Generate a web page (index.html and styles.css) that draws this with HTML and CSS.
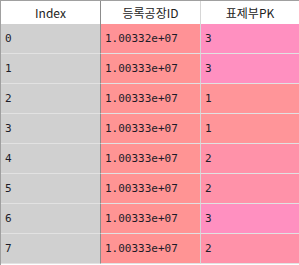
FILE: index.html
```html
<!DOCTYPE html>
<html>
<head>
<meta charset="utf-8">
<link rel="stylesheet" href="styles.css">
</head>
<body>
<div class="table">
  <div class="row head">
    <div class="cell idx">Index</div>
    <div class="cell c2">등록공장ID</div>
    <div class="cell c3">표제부PK</div>
  </div>
  <div class="row"><div class="cell idx">0</div><div class="cell c2 a">1.00332e+07</div><div class="cell c3 v3">3</div></div>
  <div class="row"><div class="cell idx">1</div><div class="cell c2">1.00333e+07</div><div class="cell c3 v3">3</div></div>
  <div class="row"><div class="cell idx">2</div><div class="cell c2">1.00333e+07</div><div class="cell c3 v1">1</div></div>
  <div class="row"><div class="cell idx">3</div><div class="cell c2">1.00333e+07</div><div class="cell c3 v1">1</div></div>
  <div class="row"><div class="cell idx">4</div><div class="cell c2">1.00333e+07</div><div class="cell c3 v2">2</div></div>
  <div class="row"><div class="cell idx">5</div><div class="cell c2">1.00333e+07</div><div class="cell c3 v2">2</div></div>
  <div class="row"><div class="cell idx">6</div><div class="cell c2">1.00333e+07</div><div class="cell c3 v3">3</div></div>
  <div class="row"><div class="cell idx">7</div><div class="cell c2">1.00333e+07</div><div class="cell c3 v2">2</div></div>
</div>
</body>
</html>
```
FILE: styles.css
```css
html, body {
  margin: 0;
  padding: 0;
  background: #ffffff;
  overflow: hidden;
}
.table {
  width: 299px;
  height: 265px;
  border-top: 1px solid #a0a0a0;
  border-left: 1px solid #a0a0a0;
  box-sizing: border-box;
  font-family: "DejaVu Sans Mono", monospace;
  font-size: 11px;
  color: #1c1c28;
}
.row {
  display: grid;
  grid-template-columns: 100px 100px 1fr;
  height: 30px;
}
.cell {
  display: flex;
  align-items: center;
  padding-left: 4px;
  border-bottom: 1px solid #e2e2e2;
  box-sizing: border-box;
}
.idx {
  background: #d0d0d0;
  border-right: 1px solid #8c8c8c;
}
.c2 {
  background: #ff9494;
  border-right: 1px solid #d6d6d6;
}
.c2.a { background: #ff9296; }
.v3 { background: #ff90c0; }
.v2 { background: #ff92a9; }
.v1 { background: #ff9599; }
.head {
  height: 23px;
  font-family: "Noto Sans CJK KR", "Noto Sans", sans-serif;
  font-size: 12px;
  color: #222;
}
.head .cell {
  background: #ffffff;
  justify-content: center;
  padding-left: 0;
  border-bottom: none;
}
.head .idx { border-right: 1px solid #8c8c8c; }
.head .c2 { border-right: 1px solid #d6d6d6; }
```
